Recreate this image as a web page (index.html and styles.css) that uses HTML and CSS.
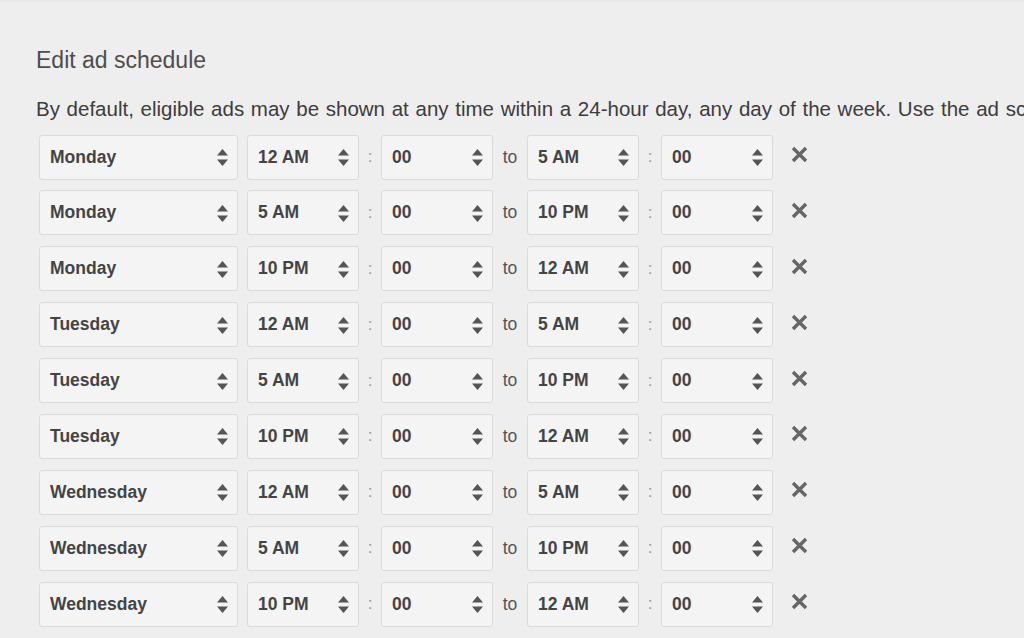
FILE: index.html
```html
<!DOCTYPE html>
<html lang="en">
<head>
    <meta charset="UTF-8">
    <meta name="viewport" content="width=device-width, initial-scale=1.0">
    <title>Edit ad schedule</title>
    <link rel="stylesheet" href="styles.css">
</head>
<body>

    <div class="panel">
        <h2>Edit ad schedule</h2>
        <p class="intro">By default, eligible ads may be shown at any time within a 24-hour day, any day of the week. Use the ad schedule to specify certain hours or days when you want your ads to appear.</p>

        <div id="scheduleRows"></div>
    </div>

    <script>
        const rows = [
            ['Monday', '12 AM', '5 AM'],
            ['Monday', '5 AM', '10 PM'],
            ['Monday', '10 PM', '12 AM'],
            ['Tuesday', '12 AM', '5 AM'],
            ['Tuesday', '5 AM', '10 PM'],
            ['Tuesday', '10 PM', '12 AM'],
            ['Wednesday', '12 AM', '5 AM'],
            ['Wednesday', '5 AM', '10 PM'],
            ['Wednesday', '10 PM', '12 AM'],
            ['Thursday', '12 AM', '5 AM']
        ];

        // up/down arrows drawn on the right of each dropdown
        const arrows = `<svg class="arrows" width="11" height="17" viewBox="0 0 11 17">
            <polygon points="5.5,0 11,6.5 0,6.5" fill="#555"/>
            <polygon points="0,10.5 11,10.5 5.5,17" fill="#555"/>
        </svg>`;

        function dropdown(value, size) {
            return `<div class="select ${size}"><span>${value}</span>${arrows}</div>`;
        }

        const list = document.getElementById('scheduleRows');
        rows.forEach(r => {
            list.innerHTML += `
                <div class="row">
                    ${dropdown(r[0], 'day')}
                    ${dropdown(r[1], 'time')}
                    <span class="colon">:</span>
                    ${dropdown('00', 'time')}
                    <span class="to">to</span>
                    ${dropdown(r[2], 'time')}
                    <span class="colon">:</span>
                    ${dropdown('00', 'time')}
                    <svg class="remove" width="17" height="17" viewBox="0 0 17 17">
                        <path d="M2 2 L15 15 M15 2 L2 15" stroke="#666" stroke-width="3.4" stroke-linecap="butt"/>
                    </svg>
                </div>
            `;
        });
    </script>

</body>
</html>
```

FILE: styles.css
```css
html, body {
    margin: 0;
    height: 100%;
    overflow: hidden;
}
body {
    font-family: "Liberation Sans", Arial, sans-serif;
    background-color: #eeeeee;
    color: #444;
    box-shadow: inset 0 2px 2px -1px #e6e6e6;
}
.panel {
    padding: 46px 0 0 36px;
}
.panel h2 {
    margin: 0;
    font-size: 23px;
    line-height: 28px;
    font-weight: normal;
    color: #4d4d4d;
}
.intro {
    margin: 23px 0 13.5px;
    font-size: 20.5px;
    line-height: 24px;
    word-spacing: 1px;
    white-space: nowrap;
    color: #3c3c3c;
}
.row {
    display: flex;
    align-items: center;
    height: 45px;
    margin: 0 0 10.9px 3px;
}
.select {
    display: flex;
    align-items: center;
    justify-content: space-between;
    box-sizing: border-box;
    height: 45px;
    padding: 0 9px 0 10px;
    background-color: #f4f4f4;
    border: 1px solid #dadada;
    border-radius: 3px;
    font-size: 17.5px;
    font-weight: bold;
    color: #444;
}
.select.day {
    width: 199px;
    margin-right: 9px;
}
.select.time {
    width: 112px;
}
.arrows {
    display: block;
    margin-top: 1px;
}
.colon {
    width: 22px;
    text-align: center;
    font-size: 17px;
    color: #999;
}
.to {
    width: 34px;
    text-align: center;
    font-size: 17.5px;
    color: #555;
}
.remove {
    margin-left: 17.5px;
    margin-top: -5px;
}
```
